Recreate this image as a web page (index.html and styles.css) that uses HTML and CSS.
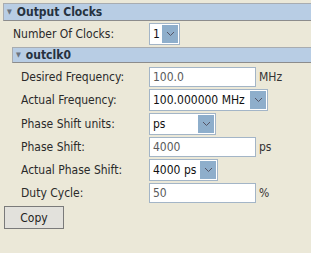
FILE: index.html
```html
<!DOCTYPE html>
<html lang="en">
<head>
    <meta charset="UTF-8">
    <title>Output Clocks</title>
    <link rel="stylesheet" href="styles.css">
</head>
<body>
    <div class="panel">
        <div class="section-head"><span class="tri">&#9660;</span>Output Clocks</div>
        <div class="row top-row">
            <label>Number Of Clocks:</label>
            <div class="combo combo-num"><span class="val">1</span><span class="btn"><svg width="9" height="6" viewBox="0 0 9 6"><path d="M1 1 L4.5 4.5 L8 1" fill="none" stroke="#556" stroke-width="1"/></svg></span></div>
        </div>

        <div class="sub">
            <div class="section-head sub-head"><span class="tri">&#9660;</span>outclk0</div>

            <div class="row">
                <label>Desired Frequency:</label>
                <div class="field">100.0</div>
                <span class="unit">MHz</span>
            </div>
            <div class="row">
                <label>Actual Frequency:</label>
                <div class="combo combo-wide"><span class="val">100.000000 MHz</span><span class="btn"><svg width="9" height="6" viewBox="0 0 9 6"><path d="M1 1 L4.5 4.5 L8 1" fill="none" stroke="#556" stroke-width="1"/></svg></span></div>
            </div>
            <div class="row">
                <label>Phase Shift units:</label>
                <div class="combo combo-unit"><span class="val">ps</span><span class="btn"><svg width="9" height="6" viewBox="0 0 9 6"><path d="M1 1 L4.5 4.5 L8 1" fill="none" stroke="#556" stroke-width="1"/></svg></span></div>
            </div>
            <div class="row">
                <label>Phase Shift:</label>
                <div class="field">4000</div>
                <span class="unit">ps</span>
            </div>
            <div class="row">
                <label>Actual Phase Shift:</label>
                <div class="combo combo-ps"><span class="val">4000 ps</span><span class="btn"><svg width="9" height="6" viewBox="0 0 9 6"><path d="M1 1 L4.5 4.5 L8 1" fill="none" stroke="#556" stroke-width="1"/></svg></span></div>
            </div>
            <div class="row">
                <label>Duty Cycle:</label>
                <div class="field">50</div>
                <span class="unit">%</span>
            </div>
        </div>

        <button class="copy">Copy</button>
    </div>
</body>
</html>
```

FILE: styles.css
```css
body {
    margin: 0;
    background: #ebe8d8;
    font-family: "DejaVu Sans Condensed", "DejaVu Sans", sans-serif;
    font-stretch: condensed;
    font-size: 12px;
    color: #222;
}
.panel { padding: 3px 0 0 3px; }
.section-head {
    height: 16px;
    line-height: 16px;
    background: #b8cde4;
    border-top: 1px solid #a8acb0;
    border-left: 1px solid #a8acb0;
    border-bottom: 1px solid #8c8c8c;
    font-weight: bold;
    font-size: 12px;
    color: #26323f;
    padding-left: 3px;
}
.tri { font-size: 7px; color: #6a7480; margin-right: 5px; vertical-align: 2px; }
.sub { margin-left: 9px; margin-top: 2px; }
.sub-head { height: 14px; line-height: 14px; }

.row { display: flex; align-items: center; margin-top: 2px; white-space: nowrap; }
.top-row { padding-left: 10px; }
.top-row label { width: 136px; }
.sub .row { padding-left: 9px; }
.sub .row label { width: 128px; }
.sub-head + .row { margin-top: 4px; }
label { color: #2a2a2a; }

.field {
    width: 102px;
    height: 18px;
    line-height: 18px;
    border: 1px solid #a3b5c7;
    background: #fff;
    padding-left: 3px;
    color: #5a5a5a;
}
.unit { margin-left: 3px; color: #333; }

.combo {
    height: 22px;
    border: 1px solid #a3b5c7;
    background: #fff;
    display: flex;
    padding: 1px;
    box-sizing: border-box;
}
.combo .val { flex: 1; padding-left: 2px; line-height: 18px; color: #111; overflow: hidden; }
.combo .btn { width: 16px; background: #8eaecb; display: flex; align-items: center; justify-content: center; }
.combo-num { width: 31px; }
.combo-wide { width: 119px; }
.combo-unit { width: 67px; }
.combo-ps { width: 69px; }

.copy {
    display: block;
    margin: 3px 0 0 1px;
    width: 60px;
    height: 23px;
    font-family: "DejaVu Sans Condensed", "DejaVu Sans", sans-serif;
    font-stretch: condensed;
    font-size: 12px;
    color: #222;
    background: #e2e1dc;
    border: 1px solid #7a7a7a;
    border-radius: 0;
    padding: 0;
}
```
